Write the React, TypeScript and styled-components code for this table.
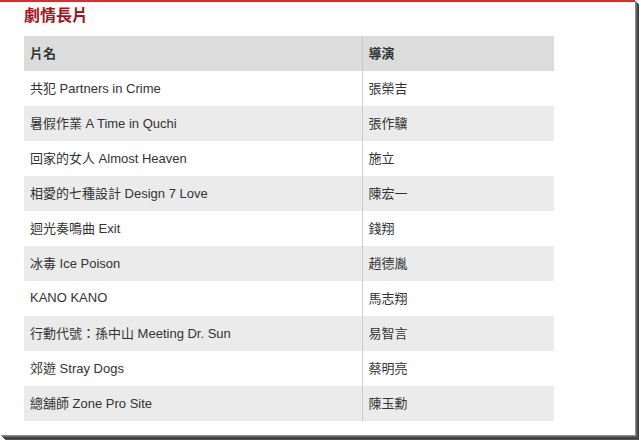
import React from 'react';
import styled, { createGlobalStyle } from 'styled-components';

const films = [
  { title: '共犯 Partners in Crime', director: '張榮吉' },
  { title: '暑假作業 A Time in Quchi', director: '張作驥' },
  { title: '回家的女人 Almost Heaven', director: '施立' },
  { title: '相愛的七種設計 Design 7 Love', director: '陳宏一' },
  { title: '迴光奏鳴曲 Exit', director: '錢翔' },
  { title: '冰毒 Ice Poison', director: '趙德胤' },
  { title: 'KANO KANO', director: '馬志翔' },
  { title: '行動代號：孫中山 Meeting Dr. Sun', director: '易智言' },
  { title: '郊遊 Stray Dogs', director: '蔡明亮' },
  { title: '總舖師 Zone Pro Site', director: '陳玉勳' },
];

export default function App() {
  return (
    <>
      <GlobalStyle />
      <Frame>
        <Page>
          <Title>劇情長片</Title>
          <Table>
            <thead>
              <tr>
                <HeadCell>片名</HeadCell>
                <HeadCell divider>導演</HeadCell>
              </tr>
            </thead>
            <tbody>
              {films.map((f, i) => (
                <Row key={i} striped={i % 2 === 1}>
                  <Cell>{f.title}</Cell>
                  <Cell divider>{f.director}</Cell>
                </Row>
              ))}
            </tbody>
          </Table>
        </Page>
      </Frame>
    </>
  );
}

const GlobalStyle = createGlobalStyle`
  html, body {
    margin: 0;
    padding: 0;
    background: #fff;
  }
`;

const Frame = styled.div`
  width: 639px;
  height: 440px;
  overflow: hidden;
`;

const Page = styled.div`
  box-sizing: border-box;
  width: 635px;
  height: 435px;
  background: #fff;
  border-top: 2px solid #e8262b;
  padding: 2px 0 0 24px;
  box-shadow: 1px 1px 0 #8a8a8a, 2px 2px 0 #666, 3px 3px 0 #4a4a4a, 4px 4px 0 #3a3a3a, 5px 5px 0 #555;
  font-family: 'Liberation Sans', Arial, 'Noto Sans CJK TC', sans-serif;
`;

const Title = styled.h2`
  margin: 0;
  height: 32px;
  line-height: 20px;
  font-size: 16px;
  font-weight: bold;
  color: #a5141a;
  font-family: 'Noto Sans CJK TC', sans-serif;
`;

const Table = styled.table`
  width: 530px;
  border-collapse: collapse;
  font-size: 13px;
  color: #333;
`;

const HeadCell = styled.th<{ divider?: boolean }>`
  box-sizing: border-box;
  height: 35px;
  padding: 0 6px 2px;
  text-align: left;
  font-weight: bold;
  background: #dcdcdc;
  width: ${({ divider }) => (divider ? '192px' : 'auto')};
  border-left: ${({ divider }) => (divider ? '1px solid #c8c8c8' : 'none')};
  font-family: 'Noto Sans CJK TC', sans-serif;
`;

const Row = styled.tr<{ striped: boolean }>`
  background: ${({ striped }) => (striped ? '#ebebeb' : '#fff')};
`;

const Cell = styled.td<{ divider?: boolean }>`
  box-sizing: border-box;
  height: 35px;
  padding: 0 6px 2px;
  border-left: ${({ divider }) => (divider ? '1px solid #cccccc' : 'none')};
`;
